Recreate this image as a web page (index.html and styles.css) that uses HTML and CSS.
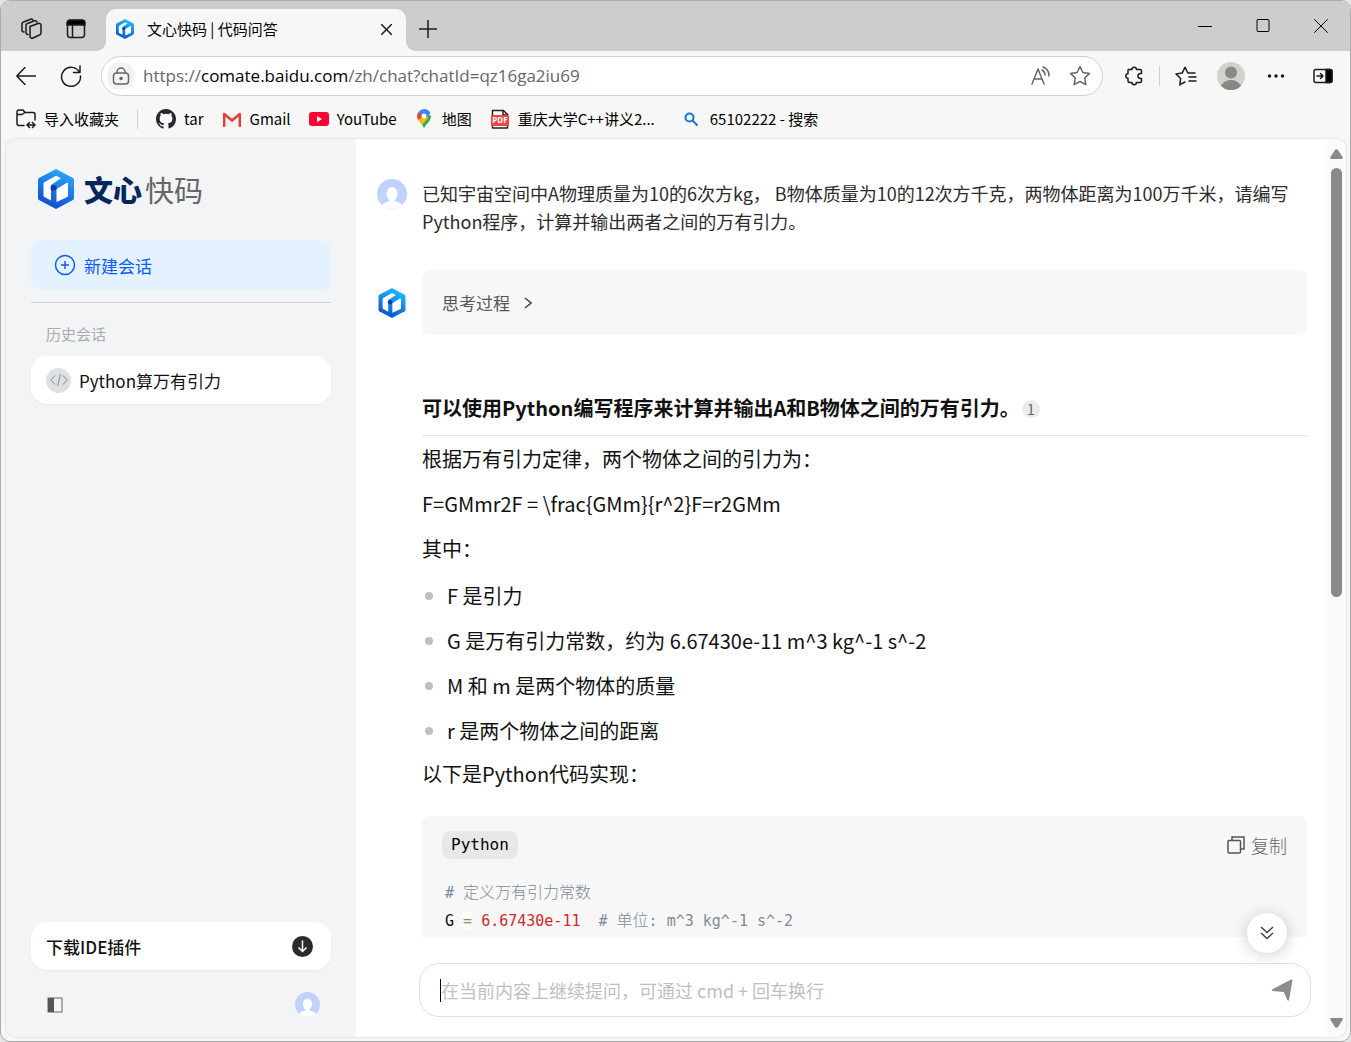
FILE: index.html
```html
<!DOCTYPE html>
<html lang="zh-CN">
<head>
<meta charset="utf-8">
<title>文心快码 | 代码问答</title>
<link rel="stylesheet" href="styles.css">
</head>
<body>

<!-- shared icons -->
<svg class="defs" aria-hidden="true">
<defs>
<linearGradient id="blue" x1="0.7" y1="0" x2="0.3" y2="1">
<stop offset="0" stop-color="#1fc1ff"/>
<stop offset="1" stop-color="#0b4fc9"/>
</linearGradient>
<linearGradient id="navy" x1="0.7" y1="0" x2="0.3" y2="1">
<stop offset="0" stop-color="#29a9ff"/>
<stop offset="1" stop-color="#1149c4"/>
</linearGradient>
<symbol id="cube" viewBox="0 0 36 40">
<path stroke="none" d="M18 0 35 9q1 .6 1 2v18q0 1.400-1 2L18 40 1 31q-1-.6-1-2V11q0-1.400 1-2Z"/>
<path fill="#fff" d="M5.500 14.500q0-.8.8-1.200L17.500 7q.6-.3 1.200 0L23 9.200 13 16v15.500L6.200 28q-.7-.4-.7-1.200Z"/>
<path fill="#fff" d="M18.500 21q0-1 .8-1.500l9.700-5.700q1-.5 1 .5v12.500q0 .8-.7 1.200L18.500 33Z"/>
<circle cx="15.500" cy="19" r="3" fill="#0a3fa8"/>
</symbol>
<symbol id="user" viewBox="0 0 30 30">
<circle cx="15" cy="15" r="15" fill="#bfd3fc"/>
<path fill="#fff" d="M15 8c-3.500 0-5.500 3-5.500 6.500 0 3 1.500 5.500 3 6.500v1.500c-3 .3-6 1-7.500 3.500A15 15 0 0 0 25 26c-1.500-2.500-4.500-3.200-7.500-3.500V21c1.500-1 3-3.500 3-6.500C20.500 11 18.500 8 15 8Z"/>
</symbol>
</defs>
</svg>

<div class="window">
<div class="tabStrip">
<button class="iconButton" aria-label="工作区"><svg width="22" height="22" viewBox="0 0 22 22"><path d="M9 8.500 17 5.500a2 2 0 0 1 3 2V15a2 2 0 0 1-1.500 2L12 20a2 2 0 0 1-3-2Z"/><path d="M7 16.500a2 2 0 0 1-2-2V7.500a2 2 0 0 1 1.500-2L13 3a2 2 0 0 1 3 1"/><path d="M3 14a2 2 0 0 1-2-2V6a2 2 0 0 1 1.500-2L9 1.500a2 2 0 0 1 3 .5"/></svg></button>
<button class="iconButton" aria-label="标签页操作"><svg width="20" height="20" viewBox="0 0 20 20"><rect x="1.500" y="1.500" width="17" height="17" rx="3"/><path class="solid" d="M1 6V4a3 3 0 0 1 3-3h12a3 3 0 0 1 3 3v2Z"/><path d="M6.500 6v12"/></svg></button>
<div class="tab">
<svg class="tabLogo" width="18" height="20"><use href="#cube" fill="url(#blue)"/></svg>
<span class="tabTitle">文心快码 | 代码问答</span>
<button class="iconButton" aria-label="关闭标签页"><svg width="11" height="11" viewBox="0 0 11 11"><path d="m.5.5 10 10m0-10-10 10"/></svg></button>
</div>
<button class="iconButton newTab" aria-label="新建标签页"><svg width="18" height="18" viewBox="0 0 18 18"><path d="M9 0v18M0 9h18"/></svg></button>
<div class="windowButtons">
<button aria-label="最小化"><svg width="14" height="14" viewBox="0 0 14 14"><path d="M0 7.500h14"/></svg></button>
<button aria-label="最大化"><svg width="14" height="14" viewBox="0 0 14 14"><rect x="1" y=".5" width="12" height="12" rx="1"/></svg></button>
<button aria-label="关闭"><svg width="14" height="14" viewBox="0 0 14 14"><path d="m.5.5 13 13m0-13-13 13"/></svg></button>
</div>
</div>

<div class="toolbar">
<button class="iconButton" aria-label="返回"><svg width="20" height="18" viewBox="0 0 20 18"><path d="M20 9H1M9 .5.800 9 9 17.500"/></svg></button>
<button class="iconButton" aria-label="刷新"><svg width="22" height="22" viewBox="0 0 22 22"><path d="M19.500 7.500A9.500 9.500 0 1 0 20.500 11M20 1v6.500h-6.500"/></svg></button>
<div class="addressBar">
<span class="lock"><svg width="18" height="18" viewBox="0 0 18 18"><rect x="1.500" y="6" width="15" height="11" rx="3"/><path d="M5 6V5a4 4 0 0 1 8 0v1"/><circle class="solid" cx="9" cy="11.500" r="1"/></svg></span>
<a class="url" href="#">https://<b>comate.baidu.com</b>/zh/chat?chatId=qz16ga2iu69</a>
<button class="iconButton gray" aria-label="大声朗读"><svg width="20" height="20" viewBox="0 0 20 20"><path d="M1 18 7 3l6 15M3 13h8M11 4c2 1 3 3 3 5M12 1c4 1.500 6 5 6 9"/></svg></button>
<button class="iconButton gray" aria-label="收藏"><svg width="22" height="22" viewBox="0 0 22 22"><path d="m11 1.500 2.900 6 6.600.9-4.800 4.600 1.200 6.600L11 16.500l-5.900 3.100L6.300 13 1.500 8.400l6.600-.9Z"/></svg></button>
</div>
<button class="iconButton" aria-label="扩展"><svg width="20" height="20" viewBox="0 0 20 20"><path d="M4.500 3.500H8a2.200 2.200 0 0 1 4.400 0H16a1.500 1.500 0 0 1 1.500 1.500v2.500h-1a2.500 2.500 0 0 0 0 5h1V15a1.500 1.500 0 0 1-1.500 1.500h-3.600a2.200 2.200 0 0 1-4.400 0H5.500A1.500 1.500 0 0 1 4 15v-2.800a2.200 2.200 0 0 1 0-4.400V4Z"/></svg></button>
<span class="line"></span>
<button class="iconButton" aria-label="收藏夹"><svg width="22" height="20" viewBox="0 0 22 20"><path d="M7 17.500 4.800 19l.8-6.500L1 8l6.200-.9L10 1.200 12.800 7H20M14 11h7M14 15h7M10 16l-3 1.500"/></svg></button>
<button class="iconButton" aria-label="个人资料"><svg class="profile" width="28" height="28" viewBox="0 0 28 28"><circle cx="14" cy="14" r="14" fill="#d3d1cc"/><circle cx="14" cy="10.500" r="6" fill="#8b8784"/><path fill="#8b8784" d="M4 24c2-4 6-6 10-6s8 2 10 6a14 14 0 0 1-20 0Z"/></svg></button>
<button class="iconButton" aria-label="更多"><svg width="18" height="18" viewBox="0 0 18 18"><g class="solid"><circle cx="2.500" cy="9" r="1"/><circle cx="9" cy="9" r="1"/><circle cx="15.500" cy="9" r="1"/></g></svg></button>
<button class="iconButton sidePane" aria-label="侧边栏"><svg width="20" height="16" viewBox="0 0 20 16"><rect x="1" y="1.500" width="18" height="13" rx="2"/><path class="solid" d="M13 1.500h4a2 2 0 0 1 2 2v9a2 2 0 0 1-2 2h-4Z"/><path d="M4 8h6M7.500 5.500 10 8l-2.500 2.500"/></svg></button>
</div>

<nav class="bookmarks">
<a href="#"><svg width="20" height="20" viewBox="0 0 20 20"><path d="M8 16.500H3a2 2 0 0 1-2-2V3a2 2 0 0 1 2-2h4l2 2.500h8a2 2 0 0 1 2 2V11M1 5.500h5l3-2M11 16h8m-5.500-2.500L11 16l2.500 2.500m3-5L19 16l-2.500 2.500"/></svg>导入收藏夹</a>
<span class="line"></span>
<a href="#"><svg width="20" height="20" viewBox="0 0 16 16"><path fill="#24292f" stroke="none" d="M8 0C3.580 0 0 3.580 0 8c0 3.540 2.290 6.530 5.470 7.590.4.070.55-.17.550-.38 0-.19-.01-.82-.01-1.490-2.010.37-2.530-.49-2.690-.94-.09-.23-.48-.94-.82-1.130-.28-.15-.68-.52-.01-.53.63-.01 1.080.58 1.230.82.72 1.210 1.870.87 2.330.66.07-.52.28-.87.510-1.070-1.780-.2-3.640-.89-3.640-3.950 0-.87.31-1.590.82-2.150-.08-.2-.36-1.020.08-2.120 0 0 .67-.21 2.200.82a7.600 7.600 0 0 1 4 0c1.530-1.040 2.200-.82 2.200-.82.44 1.100.16 1.920.08 2.120.51.560.82 1.270.82 2.150 0 3.070-1.870 3.750-3.650 3.950.29.25.54.73.54 1.480 0 1.070-.01 1.930-.01 2.200 0 .21.15.46.550.38A8 8 0 0 0 16 8c0-4.420-3.580-8-8-8Z"/></svg>tar</a>
<a href="#"><svg width="20" height="16" viewBox="0 0 20 16"><path fill="#f0f0f0" stroke="none" d="M1 2h18v13H1Z"/><path fill="none" stroke="#db4437" stroke-width="2.500" d="M2.200 15V3L10 9.500 17.800 3v12"/></svg>Gmail</a>
<a href="#"><svg width="20" height="14" viewBox="0 0 20 14"><rect width="20" height="14" rx="3" fill="#ff0033" stroke="none"/><path fill="#fff" stroke="none" d="m8 4 5 3-5 3Z"/></svg>YouTube</a>
<a class="map" href="#"><svg width="14" height="20" viewBox="0 0 14 20"><g stroke="none"><path fill="#34a853" d="M1 10c2 3 5 5 6 10 1-5 7-7 7-13L10 4Z"/><path fill="#fbbc04" d="M1 11 9 2l2 7-6 7C4 14 2 13 1 11Z"/><path fill="#ea4335" d="M1.500 3 7 7l-6 4C-.5 8 0 5 1.500 3Z"/><path fill="#4285f4" d="M1.500 3a7 7 0 0 1 12 1L9 9 4 6Z"/><circle cx="7" cy="7" r="2.500" fill="#fff"/></g></svg>地图</a>
<a href="#"><svg width="20" height="20" viewBox="0 0 20 20"><path fill="#fff" stroke="#222" d="M2.500 19V1.500h11l4 4V19Z"/><path fill="none" stroke="#222" d="M13 1.500V6h4.500"/><rect x="1" y="6" width="18" height="11" rx="1" fill="#f04444" stroke="none"/><text x="10" y="14" class="pdf">PDF</text></svg>重庆大学C++讲义2...</a>
<a href="#"><svg class="search" width="14" height="14" viewBox="0 0 14 14"><circle cx="5.500" cy="5.500" r="4"/><path d="m8.500 8.500 4.500 4.500"/></svg>65102222 - 搜索</a>
</nav>

<div class="page">
<aside class="sidebar">
<div class="brand">
<svg width="36" height="40"><use href="#cube" fill="url(#navy)"/></svg>
<span><b>文心</b>快码</span>
</div>
<button class="newChat"><svg width="22" height="22" viewBox="0 0 22 22"><circle cx="11" cy="11" r="9.500"/><path d="M11 7v8M7 11h8"/></svg>新建会话</button>
<h2 class="historyTitle">历史会话</h2>
<a class="historyItem" href="#"><span class="codeIcon"><svg width="18" height="14" viewBox="0 0 18 14"><path d="M5 2.500.800 7 5 11.500m8-9L17.200 7 13 11.500M10.500 1l-3 12"/></svg></span>Python算万有引力</a>
<a class="download" href="#">下载IDE插件<svg width="21" height="21" viewBox="0 0 21 21"><circle cx="10.500" cy="10.500" r="10.500" fill="#2b2b2b"/><path fill="none" stroke="#fff" stroke-width="1.500" d="M10.500 4.500v11M6.500 11.500l4 4 4-4"/></svg></a>
<div class="sidebarFooter">
<button class="iconButton" aria-label="收起侧栏"><svg width="16" height="16" viewBox="0 0 16 16"><rect x="1" y="1" width="14" height="14" fill="none" stroke="#666"/><path fill="#555" stroke="none" d="M1 1h6v14H1Z"/></svg></button>
<svg width="25" height="25"><use href="#user"/></svg>
</div>
</aside>

<main class="chat">
<div class="messages">
<div class="message">
<svg class="avatar" width="30" height="30"><use href="#user"/></svg>
<p class="question">已知宇宙空间中A物理质量为10的6次方kg， B物体质量为10的12次方千克，两物体距离为100万千米，请编写Python程序，计算并输出两者之间的万有引力。</p>
</div>
<div class="message">
<svg class="avatar logo" width="30" height="30"><use href="#cube" fill="url(#blue)"/></svg>
<div class="answer">
<button class="thinking">思考过程<svg width="8" height="12" viewBox="0 0 8 12"><path d="m1 1 6 5-6 5"/></svg></button>
<h1>可以使用Python编写程序来计算并输出A和B物体之间的万有引力。<sup>1</sup></h1>
<p>根据万有引力定律，两个物体之间的引力为：</p>
<p>F=GMmr2F = \frac{GMm}{r^2}F=r2GMm</p>
<p>其中：</p>
<ul>
<li>F 是引力</li>
<li>G 是万有引力常数，约为 6.67430e-11 m^3 kg^-1 s^-2</li>
<li>M 和 m 是两个物体的质量</li>
<li>r 是两个物体之间的距离</li>
</ul>
<p>以下是Python代码实现：</p>
<div class="codeBlock">
<div class="codeHead">
<span class="language">Python</span>
<button class="copy"><svg width="18" height="18" viewBox="0 0 18 18"><rect x="1" y="4.500" width="12.500" height="12.500" rx="1"/><path d="M5 4V1h12v12h-3"/></svg>复制</button>
</div>
<pre><code><span class="comment"># <i>定义万有引力常数</i></span>
G <span class="operator">=</span> <span class="number">6.67430e-11</span>  <span class="comment"># <i>单位</i>: m^3 kg^-1 s^-2</span></code></pre>
</div>
</div>
</div>
</div>
<div class="composer">
<span class="caret"></span>
<input type="text" aria-label="提问" placeholder="在当前内容上继续提问，可通过 cmd + 回车换行">
<button aria-label="发送"><svg width="22" height="24" viewBox="0 0 22 24"><path d="M1 11.500 20 1.500q1.500-.5 1.500 1L18 22q-.7 1.500-1.700 0l-3.500-8L2 13Q0 12.500 1 11.500Z"/></svg></button>
<button class="toBottom" aria-label="滚动到底部"><svg width="14" height="14" viewBox="0 0 14 14"><path d="m1 1 6 5.500L13 1M1 7l6 5.500L13 7"/></svg></button>
</div>
</main>

<div class="scrollbar">
<svg width="13" height="10" viewBox="0 0 13 10"><path d="M1 10h11q1.500-.5.5-2L8 1Q6.500-.5 5 1L.5 8Q-.5 9.500 1 10Z"/></svg>
<div class="track"><div class="thumb"></div></div>
<svg width="13" height="10" viewBox="0 0 13 10"><path d="M1 0h11q1.500.5.500 2L8 9Q6.500 10.500 5 9L.5 2Q-.5.500 1 0Z"/></svg>
</div>
</div>
</div>

</body>
</html>
```
FILE: styles.css
```css
* {
box-sizing: border-box;
}

body {
margin: 0;
background: #e4e4e4;
color: #111;
font-family: "Noto Sans CJK SC", sans-serif;
}

button {
padding: 0;
border: 0;
background: none;
color: inherit;
font: inherit;
cursor: pointer;
}

a {
color: inherit;
text-decoration: none;
}

svg {
display: block;
flex: none;
}

.defs {
position: absolute;
width: 0;
height: 0;
}

.window {
display: flex;
flex-direction: column;
height: 100vh;
border: 1px solid #ababab;
border-radius: 10px;
background: #f7f7f7;
overflow: hidden;
}

/* browser frame */
.tabStrip,
.toolbar,
.bookmarks {
display: flex;
align-items: center;
flex: none;
color: #000;
font-size: 15px;
line-height: 20px;
}

.tabStrip svg,
.toolbar svg,
.bookmarks svg {
fill: none;
stroke: #1b1b1b;
stroke-width: 1.5;
stroke-linecap: round;
stroke-linejoin: round;
}

.tabStrip .solid,
.toolbar .solid {
fill: #000;
}

.iconButton {
display: flex;
align-items: center;
justify-content: center;
flex: none;
}

.tabStrip {
height: 50px;
padding-left: 20px;
background: #cdcdcd;
}

.tabStrip > .iconButton {
width: 22px;
height: 50px;
margin-right: 22px;
padding-top: 6px;
}

.tab {
position: relative;
display: flex;
align-items: center;
align-self: flex-end;
width: 300px;
height: 42px;
margin-left: -3px;
padding: 0 14px 2px 10px;
border-radius: 10px 10px 0 0;
background: #f7f7f7;
}

.tab::before,
.tab::after {
content: "";
position: absolute;
bottom: 0;
width: 10px;
height: 10px;
}

.tab::before {
right: 100%;
background: radial-gradient(circle at 0 0, #cdcdcd 10px, #f7f7f7 10px);
}

.tab::after {
left: 100%;
background: radial-gradient(circle at 100% 0, #cdcdcd 10px, #f7f7f7 10px);
}

.tab .tabLogo {
stroke: none;
}

.tabTitle {
flex: 1;
margin-left: 13px;
}

.tabStrip > .newTab {
margin: 0 0 0 11px;
}

.windowButtons {
display: flex;
margin-left: auto;
}

.windowButtons button {
display: flex;
align-items: center;
justify-content: center;
width: 58px;
height: 50px;
}

.windowButtons svg {
stroke: #000;
stroke-width: 1;
}

.toolbar {
height: 50px;
padding: 0 17px 0 15px;
}

.toolbar > .iconButton:first-child {
margin-right: 24px;
}

.toolbar .addressBar {
flex: 1;
display: flex;
align-items: center;
height: 40px;
margin: 0 21px 0 19px;
padding: 0 11px 0 5px;
border: 1px solid #cfcfcf;
border-radius: 20px;
background: #fff;
}

.lock {
display: flex;
align-items: center;
justify-content: center;
width: 28px;
height: 28px;
border-radius: 50%;
background: #f2f2f2;
}

.toolbar .lock svg,
.toolbar .gray svg {
stroke: #666;
}

.url {
flex: 1;
margin-left: 8px;
color: #666;
font-family: "Open Sans", sans-serif;
font-size: 17px;
}

.url b {
color: #000;
font-weight: 400;
}

.gray {
margin-left: 18px;
}

.line {
width: 1px;
height: 20px;
background: #d0d0d0;
}

.toolbar > .line {
margin: 0 15px;
}

.toolbar .profile {
margin: 0 22px 0 20px;
stroke: none;
}

.sidePane {
margin-left: 28px;
}

.bookmarks {
height: 38px;
padding: 0 15px 3px;
}

.bookmarks a {
display: flex;
align-items: center;
margin-right: 18px;
gap: 8px;
white-space: nowrap;
}

.bookmarks .line {
margin-right: 18px;
}

.bookmarks .map {
margin-left: 2px;
gap: 11px;
}

.bookmarks .search {
margin: 0 4px 0 11px;
stroke: #1976d2;
stroke-width: 2;
}

.pdf {
fill: #fff;
stroke: none;
font: bold 8px "Open Sans", sans-serif;
text-anchor: middle;
}

/* web page */
.page {
display: flex;
flex: 1;
min-height: 0;
margin: 0 4px 4px 5px;
border-radius: 10px;
background: #fff;
box-shadow: 0 0 2px #bbb;
overflow: hidden;
}

.sidebar {
display: flex;
flex-direction: column;
flex: none;
width: 350px;
padding: 28px 25px 20px;
background: #f2f4f6;
font-size: 17px;
}

.brand {
display: flex;
align-items: center;
height: 44px;
margin: 0 0 29px 7px;
gap: 10px;
color: #666;
font-size: 29px;
line-height: 44px;
}

.brand b {
margin-right: 3px;
color: #03265b;
font-weight: 900;
}

.newChat {
display: flex;
align-items: center;
height: 50px;
padding-left: 23px;
gap: 8px;
border-radius: 10px;
background: #e4f2ff;
color: #0b5cff;
}

.newChat svg {
fill: none;
stroke: #0b5cff;
stroke-width: 1.5;
}

.historyTitle {
margin: 12px 0 11px;
padding: 19px 15px 0;
border-top: 1px solid #d0d3d6;
color: #a9abad;
font-size: 15px;
font-weight: 400;
line-height: 23px;
}

.historyItem,
.download {
display: flex;
align-items: center;
height: 48px;
padding: 0 15px;
border-radius: 16px;
background: #fff;
box-shadow: 0 1px 2px #e8eaec;
}

.codeIcon {
display: flex;
align-items: center;
justify-content: center;
width: 25px;
height: 25px;
margin-right: 8px;
border-radius: 50%;
background: #dde1e4;
}

.codeIcon svg {
fill: none;
stroke: #888;
}

.download {
justify-content: space-between;
margin-top: auto;
padding-right: 18px;
font-weight: 500;
}

.sidebarFooter {
display: flex;
align-items: center;
justify-content: space-between;
margin-top: 22px;
padding: 0 11px 0 16px;
}

.chat {
display: flex;
flex-direction: column;
flex: 1;
min-width: 0;
padding: 0 16px 20px 21px;
}

.messages {
flex: 1;
min-height: 0;
padding: 40px 4px 0 0;
overflow: hidden;
}

.message {
display: flex;
gap: 15px;
}

.logo {
margin-top: 18px;
}

.question {
flex: 1;
margin: 0 0 35px;
color: #2b2b2b;
font-size: 18px;
line-height: 28px;
}

.answer {
flex: 1;
min-width: 0;
font-size: 20px;
line-height: 30px;
}

.thinking {
display: flex;
align-items: center;
width: 100%;
height: 65px;
padding: 0 20px;
gap: 14px;
border-radius: 8px;
background: #f7f7f7;
color: #555;
font-size: 17px;
}

.thinking svg {
fill: none;
stroke: #444;
stroke-width: 1.5;
}

.answer h1 {
display: flex;
align-items: center;
margin: 58px 0 8px;
padding-bottom: 12px;
border-bottom: 1px solid #e5e5e5;
font-size: 20px;
line-height: 30px;
}

.answer sup {
width: 18px;
height: 18px;
margin: 2px 0 0 2px;
border-radius: 50%;
background: #ebebeb;
color: #666;
font-size: 14px;
font-weight: 400;
line-height: 18px;
text-align: center;
}

.answer p {
margin: 0 0 15px;
}

.answer ul {
margin: 17px 0 13px;
padding: 0;
list-style: none;
}

.answer li {
display: flex;
align-items: center;
margin-bottom: 15px;
}

.answer li:last-child {
margin-bottom: 0;
}

.answer li::before {
content: "";
width: 8px;
height: 8px;
margin: 0 14px 0 3px;
border-radius: 50%;
background: #bfbfbf;
}

.codeBlock {
margin-top: 27px;
padding: 15px 20px;
border-radius: 8px;
background: #f7f7f7;
}

.codeHead {
display: flex;
justify-content: space-between;
margin-bottom: 20px;
}

.language {
height: 28px;
padding: 0 9px;
border-radius: 8px;
background: #e8e8e8;
color: #000;
font-family: "DejaVu Sans Mono", monospace;
font-size: 16px;
line-height: 28px;
}

.copy {
display: flex;
align-items: center;
gap: 6px;
color: #666;
font-size: 18px;
font-weight: 300;
line-height: 28px;
}

.copy svg {
fill: none;
stroke: #555;
stroke-width: 1.5;
}

.codeBlock pre {
height: 84px;
margin: 0;
padding-left: 3px;
line-height: 28px;
}

.codeBlock code {
display: block;
font-family: "DejaVu Sans Mono", "Noto Sans CJK SC", monospace;
font-size: 15px;
}

.comment {
color: #7d8b99;
}

.comment i {
font-size: 16px;
font-style: normal;
font-weight: 300;
line-height: 16px;
}

.operator {
background: #fcfcfc;
color: #a67f59;
}

.number {
color: #c92c2c;
}

.composer {
position: relative;
display: flex;
align-items: center;
flex: none;
height: 54px;
margin: 26px 0 0 42px;
padding: 0 17px 0 20px;
border: 1px solid #e0e0e0;
border-radius: 20px;
}

.composer input {
flex: 1;
min-width: 0;
padding: 0;
border: 0;
outline: 0;
background: none;
font: inherit;
font-size: 18px;
}

.composer input::placeholder {
color: #bfbfbf;
}

.composer svg {
fill: #8c8c8c;
}

.caret {
width: 1px;
height: 23px;
background: #000;
}

.toBottom {
position: absolute;
right: 23px;
bottom: 63px;
display: flex;
align-items: center;
justify-content: center;
width: 40px;
height: 40px;
border-radius: 50%;
background: #fff;
box-shadow: 0 2px 16px rgba(0, 0, 0, 0.2);
}

.composer .toBottom svg {
fill: none;
stroke: #444;
stroke-width: 1.5;
}

.scrollbar {
display: flex;
flex-direction: column;
align-items: center;
flex: none;
width: 19px;
padding: 10px 0 9px;
background: #fafafa;
}

.scrollbar svg {
fill: #8a8a8a;
}

.track {
flex: 1;
width: 11px;
padding: 9px 0;
}

.thumb {
height: 51%;
border-radius: 6px;
background: #8a8a8a;
}
```
